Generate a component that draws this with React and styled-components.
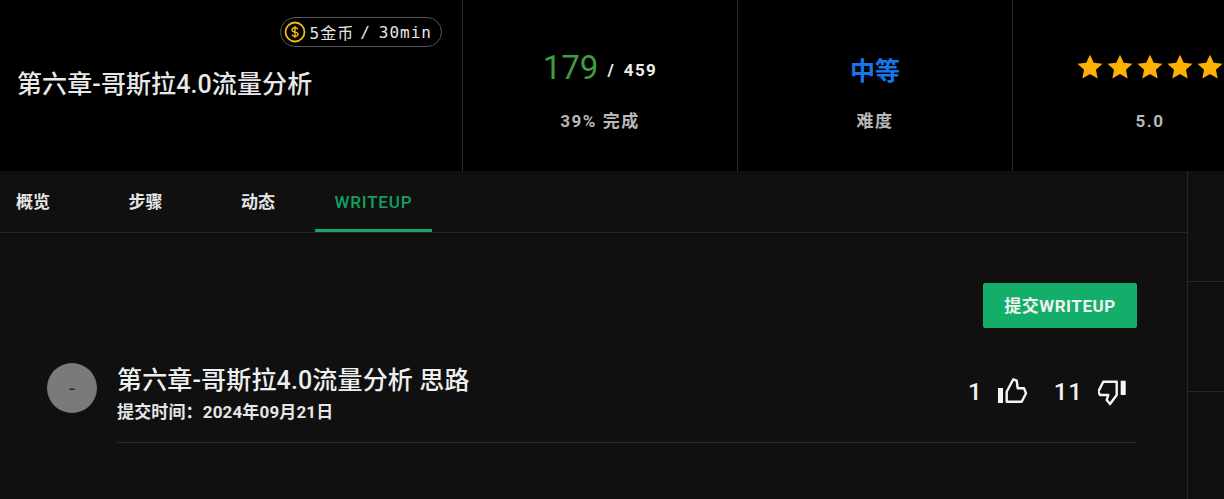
import React from 'react';
import styled, { createGlobalStyle } from 'styled-components';

const CJK = '"Noto Sans CJK SC"';
const Global = createGlobalStyle`
  html, body { margin: 0; padding: 0; background: #101010; overflow: hidden; }
  body { font-family: Roboto, ${CJK}, sans-serif; color: #eee; width: 1224px; height: 499px; }
`;
const Page = styled.div`width: 1224px; height: 499px; overflow: hidden; display: flex; flex-direction: column;`;
const Header = styled.header`height: 171px; background: #000; display: flex; flex: none;`;
const TitleCell = styled.div`width: 462px; flex: none; box-sizing: border-box; position: relative; display: flex; align-items: center; padding: 0 0 1px 17px;`;
const Title = styled.h1`margin: 0; font-size: 25px; line-height: 30px; font-weight: 500; color: #e8e8e8; letter-spacing: 0.1px;`;
const Coin = styled.div`position: absolute; top: 17px; right: 20px; height: 30px; box-sizing: border-box; border: 1px solid #555; border-radius: 15px; display: flex; align-items: center; padding: 0 9px 0 3px; font-family: "DejaVu Sans Mono", ${CJK}, monospace; font-size: 16px; letter-spacing: 1px; color: #e6e6e6; svg { margin-right: 4px; }`;
const CoinSep = styled.span`margin: 0 8px 0 6px;`;
const Stat = styled.div`width: 275px; flex: none; box-sizing: border-box; border-left: 1px solid #2c2c2c; display: flex; flex-direction: column; align-items: center; padding-top: 46px;`;
const StatMain = styled.div`height: 42px; display: flex; align-items: center; justify-content: center;`;
const StatLabel = styled.div`margin-top: 21px; font-size: 17px; font-weight: 700; color: #b8b8b8; line-height: 24px; letter-spacing: 1.5px;`;
const Big = styled.span`font-size: 33px; color: #3f9b3f; font-weight: 400;`;
const Small = styled.span`font-size: 17px; font-weight: 700; color: #eee; margin-left: 9px; margin-top: 6px; letter-spacing: 1.4px; word-spacing: 3px; white-space: pre;`;
const Level = styled.span`font-size: 25px; font-weight: 700; color: #1677e8; margin-top: 3px;`;
const Stars = styled.div`display: flex; gap: 2px;`;
const Body = styled.div`flex: 1; display: flex;`;
const Main = styled.main`width: 1187px; flex: none; border-right: 1px solid #262626; display: flex; flex-direction: column;`;
const Side = styled.aside`flex: 1; display: flex; flex-direction: column;`;
const SideCell = styled.div`height: 109px; border-bottom: 1px solid #262626; flex: none; &:first-child { height: 110px; }`;
const Tabs = styled.nav`height: 62px; box-sizing: border-box; border-bottom: 1px solid #262626; display: flex; flex: none;`;
const Tab = styled.div`width: 112.5px; padding-left: 16px; box-sizing: border-box; height: 61px; line-height: 62px; font-size: 17px; font-weight: 700; color: #e6e6e6;`;
const ActiveTab = styled.div`width: 117px; margin-left: -23px; padding-left: 20px; box-sizing: border-box; height: 61px; line-height: 62px; font-size: 17px; font-weight: 500; color: #14a05f; border-bottom: 3px solid #14a866; letter-spacing: 0.8px;`;
const Content = styled.div`padding: 50px 50px 0 47px; display: flex; flex-direction: column;`;
const Submit = styled.button`align-self: flex-end; width: 154px; height: 45px; padding: 0 0 3px; background: #12ae6a; color: #f2f2f2; border: 0; border-radius: 2px; font: 700 17px Roboto, ${CJK}, sans-serif; letter-spacing: 0.5px;`;
const Row = styled.div`display: flex; margin-top: 35px;`;
const Avatar = styled.div`width: 50px; height: 50px; border-radius: 50%; background: #7a7a7a; color: #222; display: flex; align-items: center; justify-content: center; font-size: 20px; flex: none; margin-right: 20px;`;
const Info = styled.div`flex: 1; display: flex; justify-content: space-between; border-bottom: 1px solid #2a2a2a; height: 80px; box-sizing: border-box;`;
const WTitle = styled.div`font-size: 25px; line-height: 32px; font-weight: 500; color: #efefef; margin-top: 2px; letter-spacing: 0.15px;`;
const WDate = styled.div`font-size: 17px; line-height: 22px; font-weight: 700; color: #e6e6e6; margin-top: 4px; letter-spacing: 0.15px;`;
const Votes = styled.div`display: flex; align-items: flex-start; height: 58px; font-size: 24px; line-height: 30px; font-weight: 500; letter-spacing: 1px; color: #f2f2f2; padding: 14px 9px 0 0; box-sizing: border-box; svg { margin-top: 1px; }`;
const Count = styled.span`margin-right: 15px; &:not(:first-child) { margin-left: 26px; }`;

const Star = () => (
  <svg width="28" height="28" viewBox="0 0 24 24" fill="#ffb000"><path d="M12 1.500l3.200 6.900 7.500.9-5.600 5.100 1.500 7.400L12 18.100l-6.600 3.700 1.500-7.400L1.300 9.300l7.500-.9z"/></svg>
);
const CoinIcon = () => (
  <svg width="22" height="22" viewBox="0 0 22 22" fill="none" stroke="#f5b90f"><circle cx="11" cy="11" r="9.500" strokeWidth="1.800"/><path d="M14 8.200c-.5-1-1.600-1.500-3-1.500-1.600 0-3 .8-3 2.200 0 3 6 1.400 6 4.200 0 1.400-1.400 2.200-3 2.200-1.500 0-2.600-.6-3.100-1.700M11 5v12" strokeWidth="1.400"/></svg>
);
const Up = () => (
  <svg width="30" height="28" viewBox="0 0 30 28" fill="none" stroke="#f5f5f5" strokeWidth="2.400" strokeLinejoin="round"><rect x="0" y="10" width="5" height="15" fill="#f5f5f5" stroke="none"/><path d="M8.700 13.700L15.300 1.300l3.400 1.400 1 7.600H26l2 5-4.300 8.400h-15z"/></svg>
);
const Down = () => (
  <svg width="30" height="28" viewBox="0 0 30 28" fill="none" stroke="#f5f5f5" strokeWidth="2.400" strokeLinejoin="round"><rect x="22.700" y="2.700" width="5" height="14.300" fill="#f5f5f5" stroke="none"/><path d="M18.700 3.700H5.300l-5 10L2 17h8.300l-1.600 5 3.300 4 6.700-9z"/></svg>
);

export default function App() {
  return (
    <Page>
      <Global />
      <Header>
        <TitleCell>
          <Coin><CoinIcon />5金币<CoinSep>/</CoinSep>30min</Coin>
          <Title>第六章-哥斯拉4.0流量分析</Title>
        </TitleCell>
        <Stat>
          <StatMain><Big>179</Big><Small>/ 459</Small></StatMain>
          <StatLabel>39% 完成</StatLabel>
        </Stat>
        <Stat>
          <StatMain><Level>中等</Level></StatMain>
          <StatLabel>难度</StatLabel>
        </Stat>
        <Stat>
          <StatMain><Stars>{[0,1,2,3,4].map(i => <Star key={i} />)}</Stars></StatMain>
          <StatLabel>5.0</StatLabel>
        </Stat>
      </Header>
      <Body>
        <Main>
          <Tabs>
            <Tab>概览</Tab><Tab>步骤</Tab><Tab>动态</Tab><ActiveTab>WRITEUP</ActiveTab>
          </Tabs>
          <Content>
            <Submit>提交WRITEUP</Submit>
            <Row>
              <Avatar>-</Avatar>
              <Info>
                <div>
                  <WTitle>第六章-哥斯拉4.0流量分析 思路</WTitle>
                  <WDate>提交时间：2024年09月21日</WDate>
                </div>
                <Votes><Count>1</Count><Up /><Count>11</Count><Down /></Votes>
              </Info>
            </Row>
          </Content>
        </Main>
        <Side><SideCell /><SideCell /></Side>
      </Body>
    </Page>
  );
}
